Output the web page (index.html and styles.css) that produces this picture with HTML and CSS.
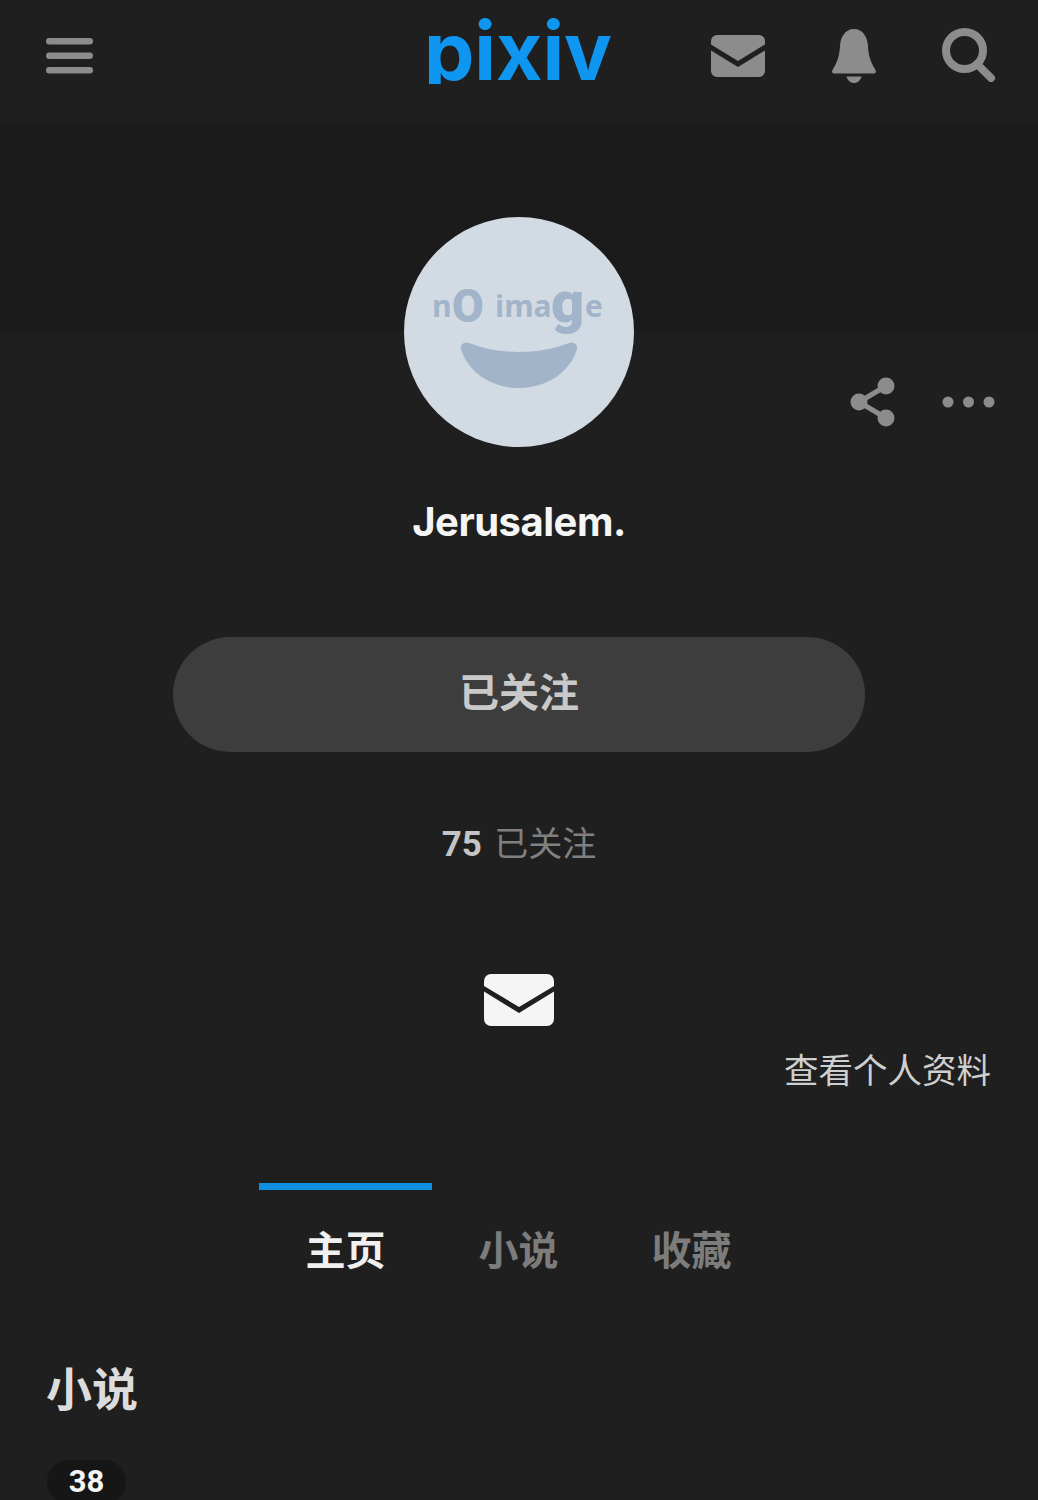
FILE: index.html
```html
<!DOCTYPE html>
<html lang="zh-CN">
<head>
<meta charset="utf-8">
<title>Jerusalem. - pixiv</title>
<link rel="stylesheet" href="styles.css">
</head>
<body>
<header class="topbar">
  <button class="icon-btn menu-btn" aria-label="菜单">
    <svg width="48" height="38" viewBox="0 0 48 38"><g fill="#8c8c8c"><rect x="0" y="1" width="47" height="6.500" rx="3.250"/><rect x="0" y="15.500" width="47" height="6.500" rx="3.250"/><rect x="0" y="30" width="47" height="6.500" rx="3.250"/></g></svg>
  </button>
  <div class="logo">pixiv</div>
  <nav class="top-actions">
    <svg class="top-mail" width="54" height="42" viewBox="0 0 54 42"><path fill="#8c8c8c" d="M6 0h42a6 6 0 0 1 6 6v3.500L27 26 0 9.500V6a6 6 0 0 1 6-6z"/><path fill="#8c8c8c" d="M0 15.500 27 32l27-16.500V36a6 6 0 0 1-6 6H6a6 6 0 0 1-6-6z"/></svg>
    <svg class="top-bell" width="46" height="54" viewBox="0 0 46 54"><path fill="#8c8c8c" d="M23 0c9 0 13.500 8 14 17 .5 9 2 15 7.500 24 1 1.800.3 3.500-2 3.500H3.500c-2.300 0-3-1.700-2-3.500C7 32 8.500 26 9 17 9.500 8 14 0 23 0z"/><path fill="#8c8c8c" d="M15.500 47.500h15c-1 4-4 6.500-7.500 6.500s-6.500-2.500-7.500-6.500z"/></svg>
    <svg class="top-search" width="54" height="54" viewBox="0 0 54 54"><circle cx="22.500" cy="22.500" r="18.500" fill="none" stroke="#8c8c8c" stroke-width="8"/><path d="M35 36l14 14" stroke="#8c8c8c" stroke-width="8" stroke-linecap="round"/></svg>
  </nav>
</header>

<div class="cover"></div>

<main class="profile">
  <div class="avatar">
    <svg width="230" height="230" viewBox="0 0 230 230">
      <circle cx="115" cy="115" r="115" fill="#d2dae3"/>
      <text class="noimage" y="100"><tspan x="28" font-size="30">n</tspan><tspan class="big" x="48" y="105" font-size="46">O</tspan><tspan x="91" y="100" font-size="30">ima</tspan><tspan class="big" x="147" y="105" font-size="58">g</tspan><tspan x="181" y="100" font-size="30">e</tspan></text>
      <path fill="#a2b4ca" d="M57 132c-1-4 3-8 8-6 15 6 32 9 50 9s35-3 50-9c5-2 9 2 8 6-7 23-30 39-58 39s-51-16-58-39z"/>
    </svg>
  </div>

  <div class="profile-tools">
    <svg width="46" height="50" viewBox="0 0 46 50"><g fill="#8c8c8c"><circle cx="36" cy="9" r="8.500"/><circle cx="9" cy="25" r="8.500"/><circle cx="36" cy="41" r="8.500"/></g><path d="M36 9 9 25l27 16" fill="none" stroke="#8c8c8c" stroke-width="5"/></svg>
    <svg width="54" height="12" viewBox="0 0 54 12"><g fill="#8c8c8c"><circle cx="6" cy="6" r="5.500"/><circle cx="26.500" cy="6" r="5.500"/><circle cx="47" cy="6" r="5.500"/></g></svg>
  </div>

  <h1 class="user-name">Jerusalem.</h1>
  <button class="follow-btn">已关注</button>
  <p class="stats"><b>75</b> <span>已关注</span></p>

  <svg class="message" width="70" height="52" viewBox="0 0 70 52"><path fill="#f5f5f5" d="M7 0h56a7 7 0 0 1 7 7v5L35 33 0 12V7a7 7 0 0 1 7-7z"/><path fill="#f5f5f5" d="M0 17.500 35 39l35-21.500V45a7 7 0 0 1-7 7H7a7 7 0 0 1-7-7z"/></svg>

  <a class="profile-link">查看个人资料</a>

  <ul class="tabs">
    <li class="tab active">主页</li>
    <li class="tab">小说</li>
    <li class="tab">收藏</li>
  </ul>
</main>

<section class="works">
  <h2>小说</h2>
  <span class="count">38</span>
</section>
</body>
</html>
```
FILE: styles.css
```css
* { box-sizing: border-box; }

html, body {
  margin: 0;
  padding: 0;
  height: 1500px;
  overflow: hidden;
}

body {
  background: #1f1f1f;
  color: #f5f5f5;
  font-family: Roboto, "Noto Sans CJK SC", sans-serif;
}

.topbar {
  height: 124px;
  padding: 0 42px 0 46px;
  display: flex;
  align-items: flex-start;
  background: #1f1f1f;
  position: relative;
}

.icon-btn {
  margin: 37px 0 0;
  padding: 0;
  border: 0;
  background: none;
  line-height: 0;
}

/* wordmark sits centred over the bar; the p's tail is trimmed short */
.logo {
  position: absolute;
  left: 0;
  right: 2px;
  top: 2px;
  text-align: center;
  font-family: Inter, sans-serif;
  font-weight: 700;
  font-size: 80px;
  line-height: normal;
  color: #0f96f0;
  clip-path: inset(0 0 15px 0);
}

.top-actions {
  margin-left: auto;
  display: flex;
  align-items: flex-start;
  gap: 66px;
  padding-top: 28px;
}

.top-mail { margin-top: 7px; }
.top-bell { margin-top: 1px; }
.top-search { margin-left: -1px; }

.cover {
  height: 208px;
  background: #1b1b1b;
}

.profile {
  position: relative;
  display: flex;
  flex-direction: column;
  align-items: center;
}

.avatar {
  margin-top: -115px;
  line-height: 0;
  position: relative;
}

.noimage {
  font-family: "Open Sans", sans-serif;
  font-weight: 700;
  fill: #a2b4ca;
}

.noimage .big {
  font-family: Roboto, sans-serif;
  font-weight: 900;
}

.profile-tools {
  position: absolute;
  top: 45px;
  right: 42px;
  display: flex;
  align-items: center;
  gap: 46px;
}

.user-name {
  margin: 50px 0 0;
  font-size: 40px;
  line-height: 50px;
  font-weight: 700;
  font-family: Inter, Roboto, sans-serif;
  letter-spacing: -0.5px;
  color: #f5f5f5;
}

.follow-btn {
  margin-top: 90px;
  width: 692px;
  height: 115px;
  padding: 0 0 10px;
  border: 0;
  border-radius: 58px;
  background: #3d3d3d;
  color: #c9c9c9;
  font: 700 40px/1 "Noto Sans CJK SC", sans-serif;
}

.stats {
  margin: 67px 0 0;
  font-size: 34px;
  line-height: 46px;
  color: #808080;
}

.stats b {
  font-size: 35px;
  color: #c4c4c4;
  font-family: Roboto, sans-serif;
}

.stats span { font-family: "Noto Sans CJK SC", sans-serif; margin-left: 4px; }

.message { margin-top: 106px; }

.profile-link {
  align-self: flex-end;
  margin: 19px 47px 0 0;
  font: 400 34.500px/46px "Noto Sans CJK SC", sans-serif;
  color: #cfcfcf;
}

.tabs {
  list-style: none;
  margin: 92px 0 0 -1px;
  padding: 0;
  display: flex;
}

.tab {
  width: 173px;
  padding-top: 32px;
  border-top: 7px solid transparent;
  text-align: center;
  font: 700 40px/52px "Noto Sans CJK SC", sans-serif;
  color: #7c7c7c;
}

.tab.active {
  border-top-color: #0f8fe0;
  color: #f0f0f0;
}

.works {
  padding: 82px 46px 0;
}

.works h2 {
  margin: 0;
  font: 700 46px/60px "Noto Sans CJK SC", sans-serif;
  color: #dcdcdc;
}

.count {
  display: inline-block;
  margin: 44px 0 0 1px;
  width: 79px;
  height: 44px;
  border-radius: 22px;
  background: #161616;
  text-align: center;
  font: 700 31px/44px Roboto, sans-serif;
  color: #f5f5f5;
}
```
